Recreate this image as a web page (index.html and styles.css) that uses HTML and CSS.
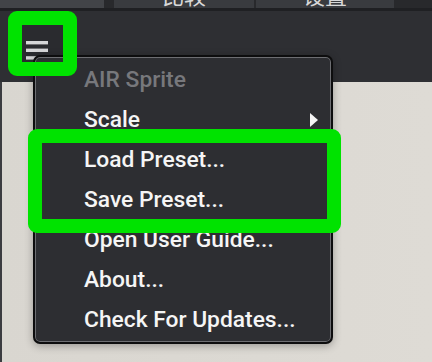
FILE: index.html
```html
<!DOCTYPE html>
<html lang="en">
<head>
    <meta charset="UTF-8">
    <meta name="viewport" content="width=device-width, initial-scale=1.0">
    <title>AIR Sprite Menu</title>
    <link rel="stylesheet" href="styles.css">
</head>
<body>
    <div class="tabs">
        <div class="tab tab-first"></div>
        <div class="tab tab-main"><span>比较</span></div>
        <div class="tab tab-second"><span>设置</span></div>
    </div>
    <div class="toolbar">
        <button class="menu-btn" aria-label="Menu">
            <svg width="22" height="20" viewBox="0 0 22 20">
                <rect x="0" y="0" width="22" height="3.4" fill="#d6d6d8"/>
                <rect x="0" y="7.6" width="22" height="3.4" fill="#d6d6d8"/>
                <rect x="0" y="15.2" width="22" height="3.4" fill="#d6d6d8"/>
            </svg>
        </button>
    </div>
    <div class="canvas"></div>

    <!-- dropdown menu -->
    <ul class="menu">
        <li class="menu-item menu-label">AIR Sprite</li>
        <li class="menu-item has-sub">Scale</li>
        <li class="menu-item">Load Preset...</li>
        <li class="menu-item">Save Preset...</li>
        <li class="menu-item">Open User Guide...</li>
        <li class="menu-item">About...</li>
        <li class="menu-item">Check For Updates...</li>
    </ul>

    <!-- highlight marks -->
    <div class="mark mark-btn"></div>
    <div class="mark mark-presets"></div>
</body>
</html>
```

FILE: styles.css
```css
body {
    margin: 0;
    width: 432px;
    height: 362px;
    overflow: hidden;
    background: #dcd9d3;
    font-family: Roboto, "Noto Sans", sans-serif;
    display: flex;
    flex-direction: column;
}
.tabs {
    display: flex;
    height: 8px;
    background: #28292c;
    flex-shrink: 0;
}
.tab {
    height: 8px;
    overflow: hidden;
    background: #393b3f;
    color: #d8d8d8;
    font-family: "Noto Sans CJK SC", sans-serif;
    font-size: 22px;
    line-height: 22px;
    text-align: center;
}
.tab span {
    display: block;
    margin-top: -17px;
}
.tab-first {
    width: 104px;
    background: #424448;
}
.tab-main {
    width: 140px;
    margin-left: 10px;
}
.tab-second {
    width: 138px;
    margin-left: 2px;
}
.toolbar {
    border-top: 3px solid #1f2023;
    background: #2e2f33;
    padding: 12px 0 0 20px;
    box-sizing: border-box;
    height: 74px;
    flex-shrink: 0;
}
.menu-btn {
    width: 44px;
    height: 42px;
    border: none;
    padding: 13px 0 0 6px;
    background: #2a2b2f;
    display: block;
    box-sizing: border-box;
    text-align: left;
}
.menu-btn svg {
    display: block;
}
.canvas {
    flex: 1;
    border-left: 2px solid #3b3c40;
    background: linear-gradient(to right, #d9d6d0 0%, #dedbd5 100%);
}
.menu {
    position: absolute;
    left: 33px;
    top: 55px;
    width: 300px;
    height: 289px;
    box-sizing: border-box;
    margin: 0;
    padding: 3px 0 0;
    list-style: none;
    background: #2d2e32;
    border: 2px solid #0d0d0e;
    border-radius: 7px;
    box-shadow: inset 0 0 0 1px #6d6e72, 0 2px 8px rgba(0, 0, 0, 0.3);
}
.menu-item {
    position: relative;
    height: 40px;
    line-height: 40px;
    padding-left: 49px;
    font-size: 22.8px;
    font-weight: 500;
    color: #f5f5f5;
    white-space: nowrap;
}
.menu-label {
    color: #77787c;
}
.has-sub::after {
    content: "";
    position: absolute;
    right: 13px;
    top: 13px;
    border-left: 8px solid #f5f5f5;
    border-top: 7px solid transparent;
    border-bottom: 7px solid transparent;
}
.mark {
    position: absolute;
    box-sizing: border-box;
    border: 14px solid #00e300;
    border-radius: 9px;
}
.mark-btn {
    left: 8px;
    top: 11px;
    width: 69px;
    height: 65px;
}
.mark-presets {
    left: 28px;
    top: 129px;
    width: 313px;
    height: 104px;
}
```
